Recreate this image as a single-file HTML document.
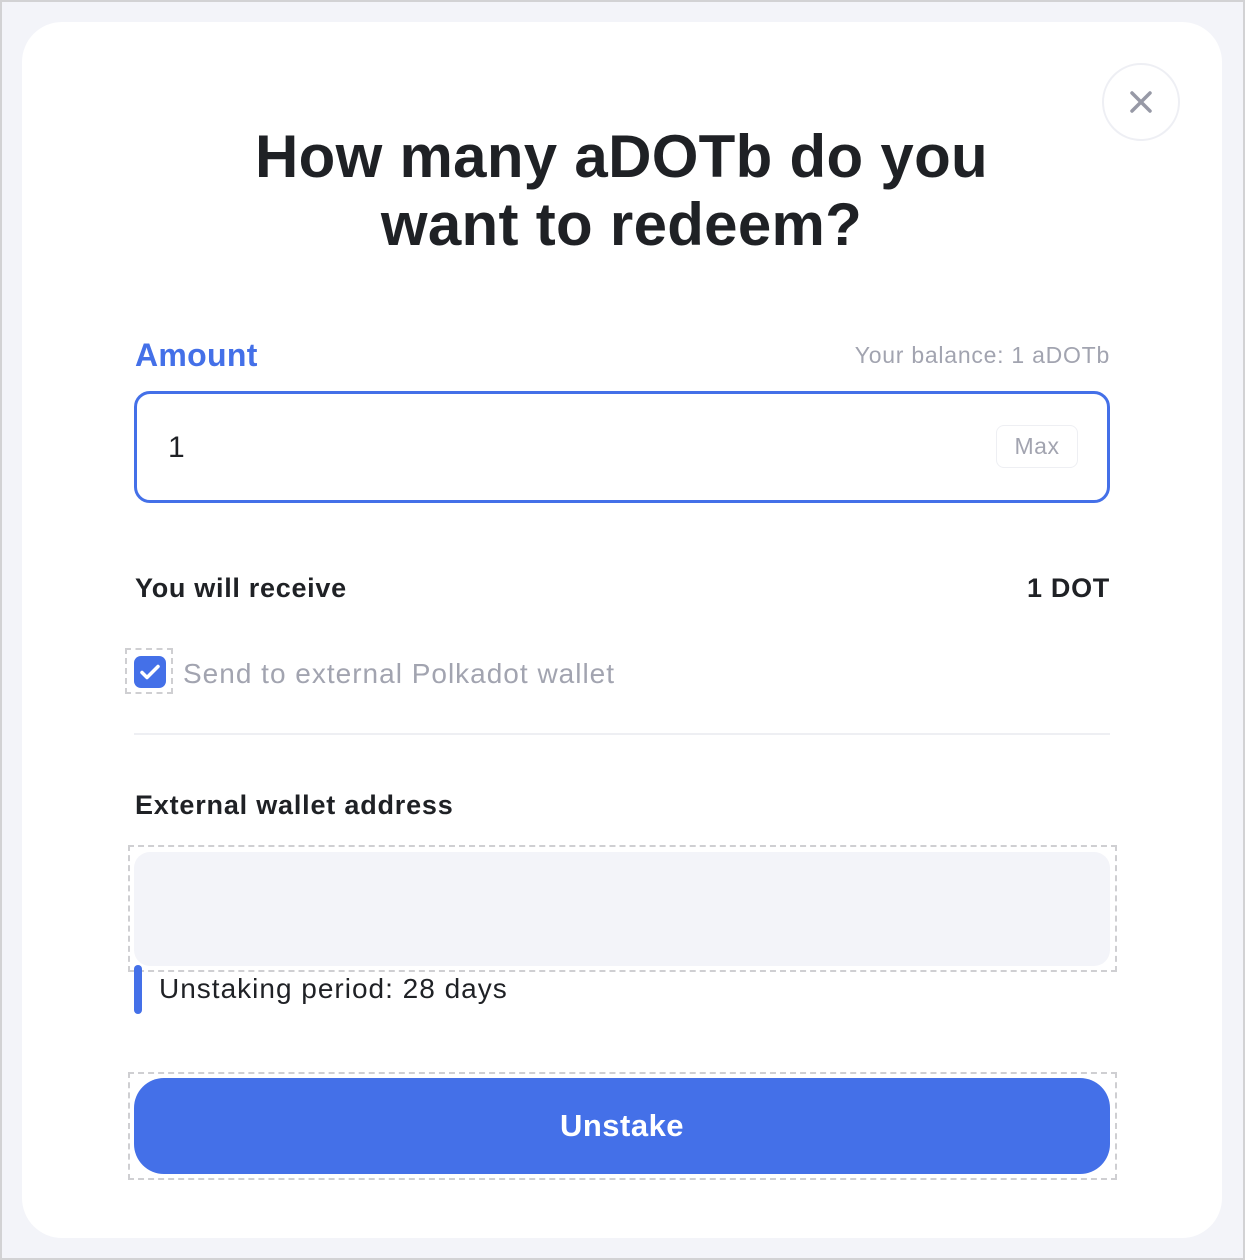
<!DOCTYPE html>
<html><head><meta charset="utf-8"><style>
*{box-sizing:border-box;margin:0;padding:0}
html,body{width:1245px;height:1260px;overflow:hidden}
body{background:#f3f4f9;box-shadow:inset 0 0 0 2px #d2d2d4;position:relative;font-family:"Liberation Sans",sans-serif}
.card{position:absolute;left:22px;top:22px;width:1200px;height:1216px;background:#fff;border-radius:40px}
.abs{position:absolute}
h1{position:absolute;left:0;width:1243px;top:123px;text-align:center;font-size:60px;line-height:68px;font-weight:bold;color:#1f2125;letter-spacing:0.3px}
.close{left:1102px;top:63px;width:78px;height:78px;border-radius:50%;border:2px solid #eeeff4}
</style></head><body>
<div class="card"></div>
<div class="abs close"><svg width="74" height="74" viewBox="0 0 74 74" style="position:absolute;left:0;top:0"><path d="M28 28L46 46M46 28L28 46" stroke="#9799a6" stroke-width="3.5" stroke-linecap="round"/></svg></div>
<h1>How many aDOTb do you<br>want to redeem?</h1>
<div class="abs" style="left:135px;top:337px;font-size:32px;font-weight:bold;color:#4470e8;letter-spacing:0.3px">Amount</div>
<div class="abs" style="right:135px;top:342px;font-size:23px;color:#a2a4b0;letter-spacing:0.75px">Your balance: 1 aDOTb</div>
<div class="abs" style="left:134px;top:391px;width:976px;height:112px;border:3px solid #4470e8;border-radius:16px"></div>
<div class="abs" style="left:168px;top:431px;font-size:30px;color:#1f2125">1</div>
<div class="abs" style="left:996px;top:425px;width:82px;height:43px;border:1px solid #eeeff3;border-radius:8px;text-align:center;line-height:41px;font-size:23px;color:#a2a4b0;letter-spacing:0.5px">Max</div>
<div class="abs" style="left:135px;top:573px;font-size:27px;font-weight:bold;color:#1f2125;letter-spacing:0.7px">You will receive</div>
<div class="abs" style="right:135px;top:573px;font-size:27px;font-weight:bold;color:#1f2125;letter-spacing:0.7px">1 DOT</div>
<div class="abs" style="left:125px;top:648px;width:48px;height:46px;border:2px dashed #cfcfd2"></div>
<div class="abs" style="left:134px;top:656px;width:32px;height:32px;border-radius:7px;background:#4470e8"><svg width="32" height="32"><path d="M8 16.5l5 5 11-11" fill="none" stroke="#fff" stroke-width="3.5" stroke-linecap="round" stroke-linejoin="round"/></svg></div>
<div class="abs" style="left:183px;top:658px;font-size:28px;color:#a2a4b0;letter-spacing:1px">Send to external Polkadot wallet</div>
<div class="abs" style="left:134px;top:733px;width:976px;height:2px;background:#eeeff3"></div>
<div class="abs" style="left:135px;top:790px;font-size:27px;font-weight:bold;color:#1f2125;letter-spacing:0.8px">External wallet address</div>
<div class="abs" style="left:128px;top:845px;width:989px;height:127px;border:2px dashed #cfcfd2"></div>
<div class="abs" style="left:134px;top:852px;width:976px;height:114px;background:#f3f4f9;border-radius:16px"></div>
<div class="abs" style="left:134px;top:965px;width:8px;height:49px;background:#4470e8;border-radius:4px"></div>
<div class="abs" style="left:159px;top:973px;font-size:28px;color:#1f2125;letter-spacing:1px">Unstaking period: 28 days</div>
<div class="abs" style="left:128px;top:1072px;width:989px;height:108px;border:2px dashed #cfcfd2"></div>
<div class="abs" style="left:134px;top:1078px;width:976px;height:96px;background:#4470e8;border-radius:30px;color:#fff;font-size:31px;font-weight:bold;text-align:center;line-height:96px;letter-spacing:0.5px">Unstake</div>
</body></html>
